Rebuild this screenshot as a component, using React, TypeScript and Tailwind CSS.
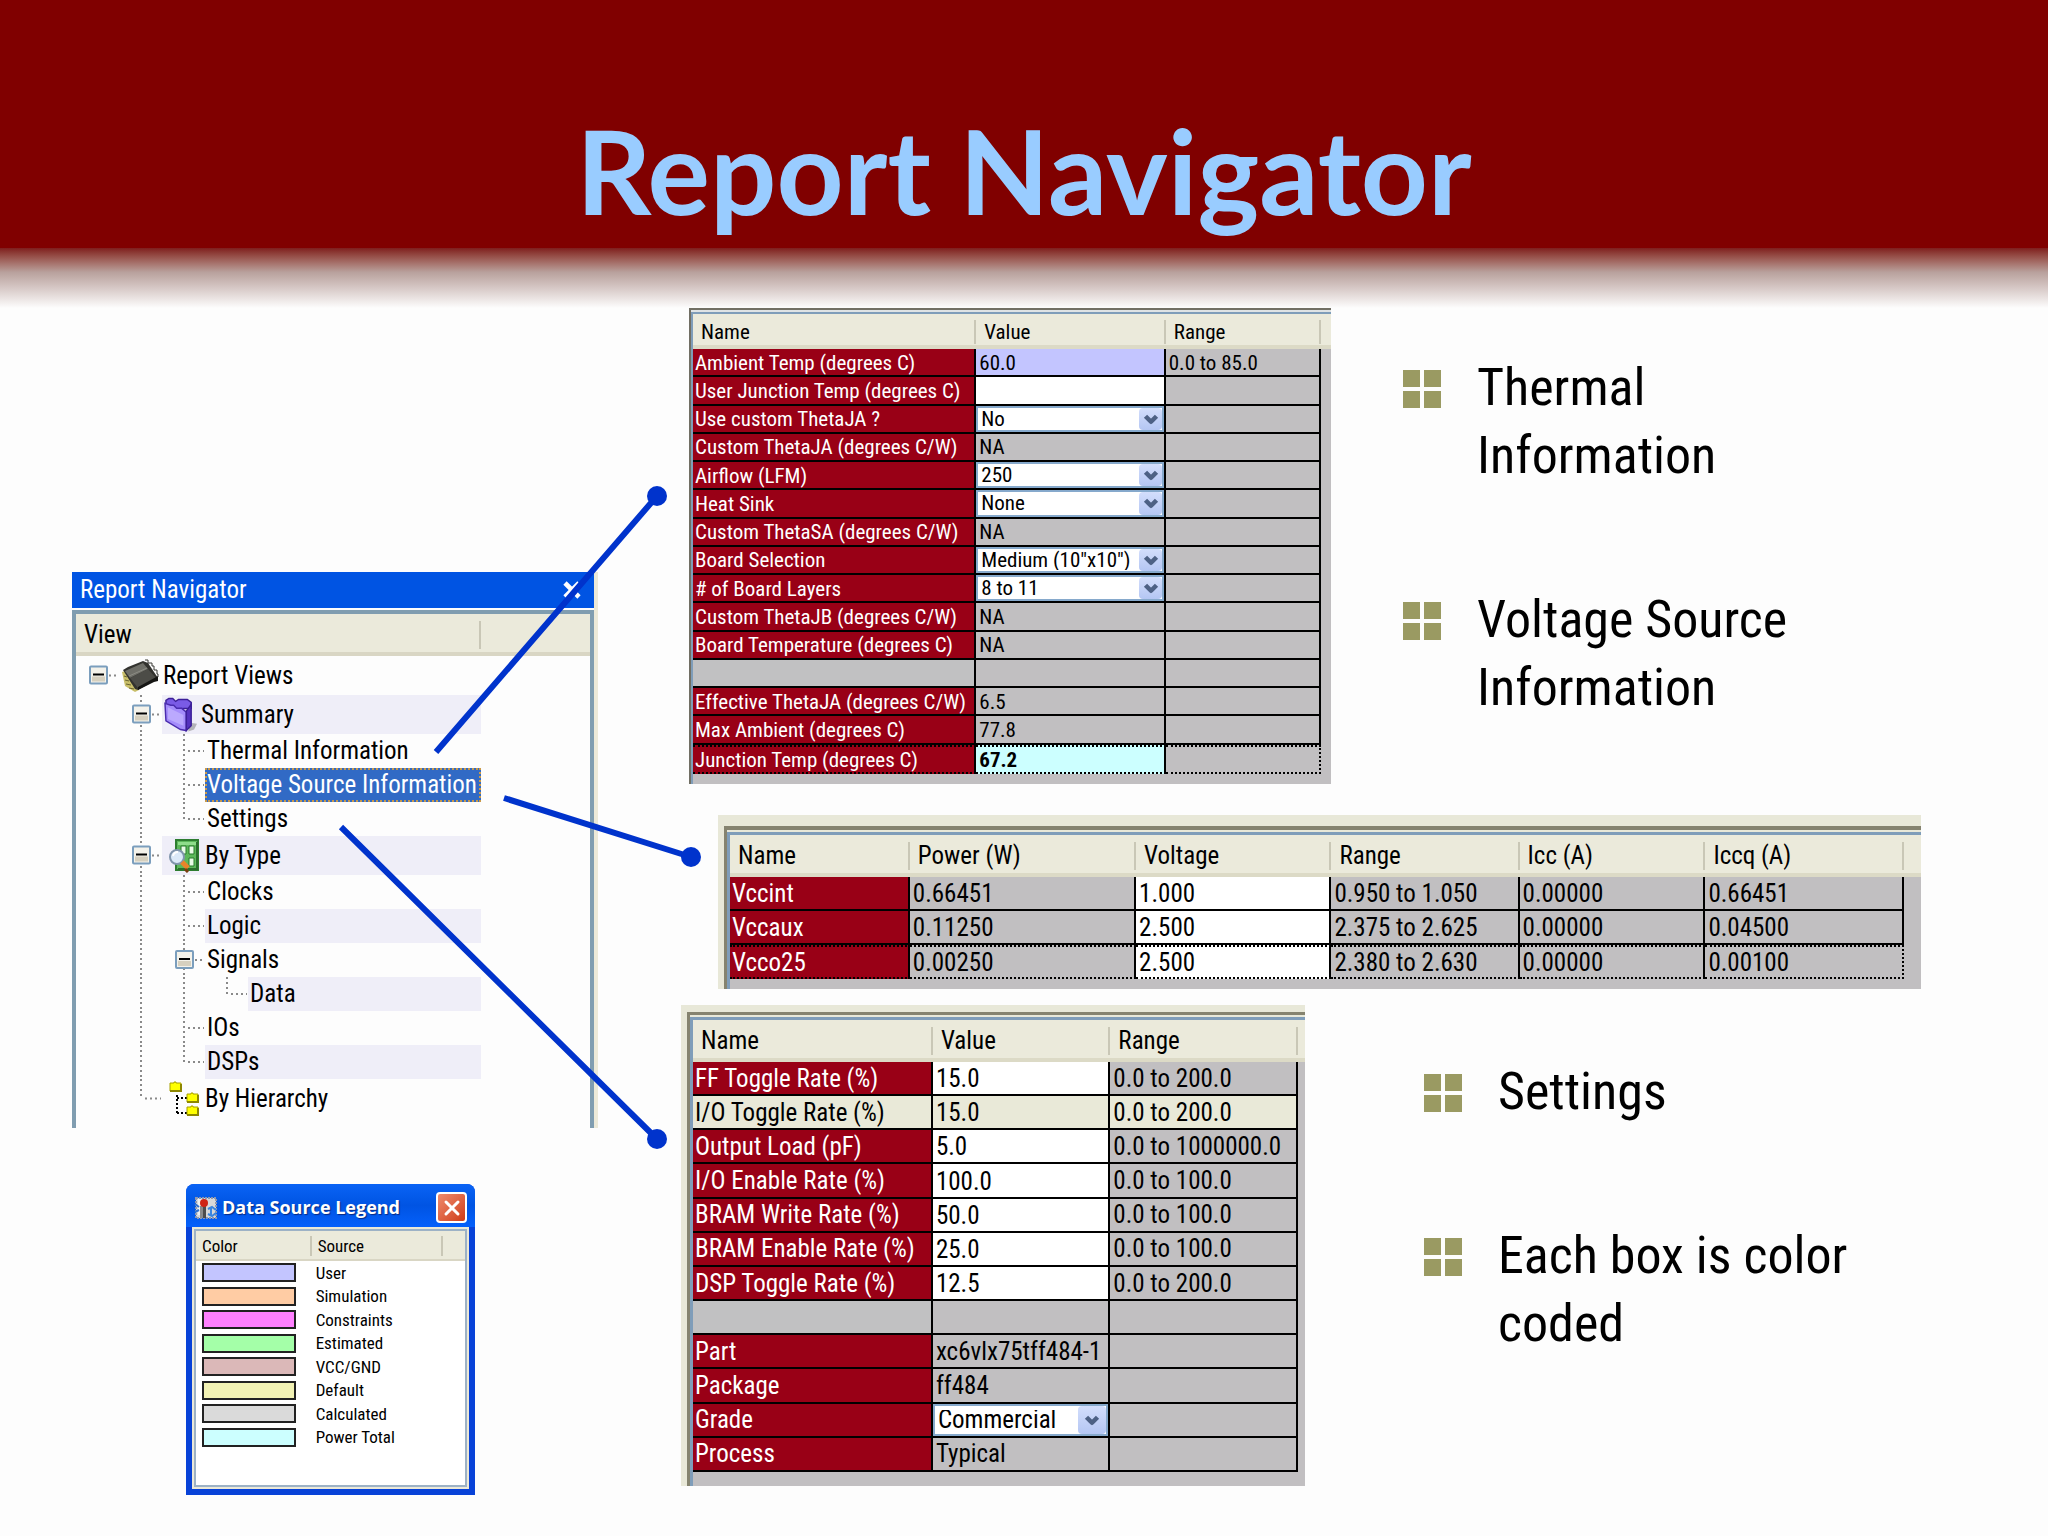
import React, { useState } from 'react';
import { ChevronDown, X } from 'lucide-react';

type Tone = 'gray' | 'white' | 'user' | 'total' | 'default';

type Cell = {
  text?: string;
  tone?: Tone;
  options?: string[];
};

type Row = {
  name: string;
  tone?: 'default';
  cells: Cell[];
  focused?: boolean;
};

type Column = { label: string; width: string };

const tones: Record<Tone, string> = {
  gray: 'bg-[#c1bfc1]',
  white: 'bg-white',
  user: 'bg-[#c3c5ff]',
  total: 'bg-[#ccffff]',
  default: 'bg-[#e9e9d8]',
};

const thermalColumns: Column[] = [
  { label: 'Name', width: 'w-[44.4%]' },
  { label: 'Value', width: 'w-[29.7%]' },
  { label: 'Range', width: 'w-[24.4%]' },
];

const thermalRows: Row[] = [
  { name: 'Ambient Temp (degrees C)', cells: [{ text: '60.0', tone: 'user' }, { text: '0.0 to 85.0' }] },
  { name: 'User Junction Temp (degrees C)', cells: [{ text: '', tone: 'white' }, {}] },
  { name: 'Use custom ThetaJA ?', cells: [{ options: ['No', 'Yes'] }, {}] },
  { name: 'Custom ThetaJA (degrees C/W)', cells: [{ text: 'NA' }, {}] },
  { name: 'Airflow (LFM)', cells: [{ options: ['250', '0', '500'] }, {}] },
  { name: 'Heat Sink', cells: [{ options: ['None', 'Custom'] }, {}] },
  { name: 'Custom ThetaSA (degrees C/W)', cells: [{ text: 'NA' }, {}] },
  { name: 'Board Selection', cells: [{ options: ['Medium (10"x10")', 'Custom'] }, {}] },
  { name: '# of Board Layers', cells: [{ options: ['8 to 11', '12 to 15'] }, {}] },
  { name: 'Custom ThetaJB (degrees C/W)', cells: [{ text: 'NA' }, {}] },
  { name: 'Board Temperature (degrees C)', cells: [{ text: 'NA' }, {}] },
  { name: '', cells: [{}, {}] },
  { name: 'Effective ThetaJA (degrees C/W)', cells: [{ text: '6.5' }, {}] },
  { name: 'Max Ambient (degrees C)', cells: [{ text: '77.8' }, {}] },
  { name: 'Junction Temp (degrees C)', cells: [{ text: '67.2', tone: 'total' }, {}], focused: true },
];

const voltageColumns: Column[] = [
  { label: 'Name', width: 'w-[15.1%]' },
  { label: 'Power (W)', width: 'w-[19%]' },
  { label: 'Voltage', width: 'w-[16.4%]' },
  { label: 'Range', width: 'w-[15.8%]' },
  { label: 'Icc (A)', width: 'w-[15.6%]' },
  { label: 'Iccq (A)', width: 'w-[16.7%]' },
];

const voltageRows: Row[] = [
  {
    name: 'Vccint',
    cells: [{ text: '0.66451' }, { text: '1.000', tone: 'white' }, { text: '0.950 to 1.050' }, { text: '0.00000' }, { text: '0.66451' }],
  },
  {
    name: 'Vccaux',
    cells: [{ text: '0.11250' }, { text: '2.500', tone: 'white' }, { text: '2.375 to 2.625' }, { text: '0.00000' }, { text: '0.04500' }],
  },
  {
    name: 'Vcco25',
    cells: [{ text: '0.00250' }, { text: '2.500', tone: 'white' }, { text: '2.380 to 2.630' }, { text: '0.00000' }, { text: '0.00100' }],
    focused: true,
  },
];

const settingsColumns: Column[] = [
  { label: 'Name', width: 'w-[39.2%]' },
  { label: 'Value', width: 'w-[29%]' },
  { label: 'Range', width: 'w-[30.7%]' },
];

const settingsRows: Row[] = [
  { name: 'FF Toggle Rate (%)', cells: [{ text: '15.0', tone: 'white' }, { text: '0.0 to 200.0' }] },
  {
    name: 'I/O Toggle Rate (%)',
    tone: 'default',
    cells: [{ text: '15.0', tone: 'default' }, { text: '0.0 to 200.0', tone: 'default' }],
  },
  { name: 'Output Load (pF)', cells: [{ text: '5.0', tone: 'white' }, { text: '0.0 to 1000000.0' }] },
  { name: 'I/O Enable Rate (%)', cells: [{ text: '100.0', tone: 'white' }, { text: '0.0 to 100.0' }] },
  { name: 'BRAM Write Rate (%)', cells: [{ text: '50.0', tone: 'white' }, { text: '0.0 to 100.0' }] },
  { name: 'BRAM Enable Rate (%)', cells: [{ text: '25.0', tone: 'white' }, { text: '0.0 to 100.0' }] },
  { name: 'DSP Toggle Rate (%)', cells: [{ text: '12.5', tone: 'white' }, { text: '0.0 to 200.0' }] },
  { name: '', cells: [{}, {}] },
  { name: 'Part', cells: [{ text: 'xc6vlx75tff484-1' }, {}] },
  { name: 'Package', cells: [{ text: 'ff484' }, {}] },
  { name: 'Grade', cells: [{ options: ['Commercial', 'Industrial'] }, {}] },
  { name: 'Process', cells: [{ text: 'Typical' }, {}] },
];

const legend = [
  { color: 'bg-[#c3c5ff]', source: 'User' },
  { color: 'bg-[#ffcca4]', source: 'Simulation' },
  { color: 'bg-[#ff80ff]', source: 'Constraints' },
  { color: 'bg-[#a4ffa8]', source: 'Estimated' },
  { color: 'bg-[#dbb8b8]', source: 'VCC/GND' },
  { color: 'bg-[#f2f2b4]', source: 'Default' },
  { color: 'bg-[#dadada]', source: 'Calculated' },
  { color: 'bg-[#ccffff]', source: 'Power Total' },
];

const CellContent: React.FC<{ cell: Cell; label: string; bold?: boolean }> = ({ cell, label, bold }) => {
  if (cell.options) {
    return (
      <div className="relative h-full border-2 border-[#86a9cc] bg-white">
        <select aria-label={label} className="block h-full w-full appearance-none bg-white pl-[3px] leading-5 outline-none">
          {cell.options.map((o) => (
            <option key={o}>{o}</option>
          ))}
        </select>
        <span className="pointer-events-none absolute inset-y-0 right-0 flex aspect-square items-center justify-center rounded-sm bg-linear-to-b from-[#d3defc] to-[#b4c6f3] text-[#4d6185]">
          <ChevronDown size={22} strokeWidth={5} strokeLinecap="butt" />
        </span>
      </div>
    );
  }
  if (cell.tone && cell.tone !== 'gray' && !bold) {
    return (
      <input
        aria-label={label}
        defaultValue={cell.text}
        className="block h-full w-full bg-transparent pl-[3px] leading-5 outline-none"
      />
    );
  }
  return <span className={bold ? 'pl-[3px] font-bold' : 'pl-[3px]'}>{cell.text}</span>;
};

const HeaderCell: React.FC<{ label: string }> = ({ label }) => (
  <th scope="col" className="border-b-4 border-[#dcdac6] p-0 pt-1 text-left font-normal">
    <div className="border-r-2 border-[#c9c7b6] pl-2">{label}</div>
  </th>
);

type GridProps = {
  caption: string;
  columns: Column[];
  rows: Row[];
  className: string;
  headClass: string;
  rowClass: string;
};

const PropertyGrid: React.FC<GridProps> = ({ caption, columns, rows, className, headClass, rowClass }) => (
  <table aria-label={caption} className={`w-full table-fixed border-separate border-spacing-0 whitespace-nowrap ${className}`}>
    <colgroup>
      {columns.map((c) => (
        <col key={c.label} className={c.width} />
      ))}
      <col />
    </colgroup>
    <thead className="bg-[#ebeadb]">
      <tr className={headClass}>
        {columns.map((c) => (
          <HeaderCell key={c.label} label={c.label} />
        ))}
        <td className="border-b-4 border-[#dcdac6] p-0" />
      </tr>
    </thead>
    <tbody>
      {rows.map((row, i) => {
        const line = row.focused ? 'border-y-2 border-y-black [border-top-style:dotted] [border-bottom-style:dotted]' : 'border-b-2 border-black';
        const nameTone = row.tone ? 'bg-[#e9e9d8] text-black' : row.name ? 'bg-[#990016] text-white' : 'bg-[#c1c1c2]';
        return (
          <tr key={i} className={rowClass}>
            <th scope="row" className={`border-r-2 border-r-black p-0 pl-0.5 pt-px text-left font-normal ${line} ${nameTone}`}>
              {row.name}
            </th>
            {row.cells.map((cell, j) => {
              const last = j === row.cells.length - 1;
              return (
                <td
                  key={j}
                  className={`h-px p-0 border-r-2 border-r-black ${cell.options ? '' : 'pt-px'} ${line} ${tones[cell.tone || 'gray']} ${
                    row.focused && last ? '[border-right-style:dotted]' : ''
                  }`}
                >
                  <CellContent cell={cell} label={`${row.name} ${columns[j + 1].label}`} bold={cell.tone === 'total'} />
                </td>
              );
            })}
            <td className="p-0" />
          </tr>
        );
      })}
    </tbody>
  </table>
);

const ChipIcon = () => (
  <svg width="38" height="34" viewBox="0 0 38 34" className="shrink-0">
    <path d="M1 13l3 14 10 6 4-2L4 12z" fill="#c9bf6a" />
    <path d="M3 17l3 1M4 21l4 1M5 25l5 1M8 29l5 1" stroke="#6a6430" strokeWidth="1" />
    <path d="M2 11L7 8l15-6 5 2 10 15-4 3-16 9-3-1z" fill="#33332f" />
    <path d="M4 12L22 4l5 6-18 9z" fill="#6f6f68" />
    <path d="M9 19l18-9 8 9-18 10z" fill="#4c4c47" />
    <path d="M8 17l18-8" stroke="#8c8c84" strokeWidth="1" />
    <path d="M37 17v5l-4 1-16 8v-3z" fill="#151513" />
    <path d="M24 1h3v3h4v3h2v4h3v4h1v3" stroke="#3a3a36" strokeWidth="1" fill="none" />
  </svg>
);

const FolderIcon = () => (
  <svg width="33" height="36" viewBox="0 0 34 36" className="shrink-0">
    <path d="M27 26l7 1-3 6-6 2z" fill="#777" opacity=".5" />
    <path d="M2 3l3-2h4l3 3 3-2h9l4 3v6L2 12z" fill="#7a5be6" stroke="#3c1f98" strokeWidth="1.500" />
    <path d="M1 6l6 2h3l3 3h5l5 4v19l-6-1L2 24z" fill="#a48cfb" stroke="#4a2cae" strokeWidth="1.500" />
    <path d="M4 10l6 3 6 3 4 2v11L4 22z" fill="#c4b5ff" opacity=".7" />
    <path d="M23 14l5-7v22l-5 5z" fill="#5532bf" stroke="#3c1f98" strokeWidth="1.500" />
  </svg>
);

const TypeIcon = () => (
  <svg width="37" height="34" viewBox="-5 0 37 34" className="shrink-0">
    <path d="M7 1h22v30H7z" fill="#5cb85a" stroke="#2d7d30" strokeWidth="2" />
    <path d="M9 3h18v3H9z" fill="#8fdd8b" />
    <path d="M27 3h2v28H9v-2h18z" fill="#2a6f2c" />
    <path d="M12 7h5v8h-5zM20 7h5v8h-5zM20 19h5v8h-5z" fill="#e9fbe6" stroke="#277a2a" />
    <circle cx="8" cy="18" r="7" fill="#dbe9f8" stroke="#8095ac" strokeWidth="2" />
    <path d="M4 17a5 5 0 0 1 5-4" stroke="#fff" strokeWidth="2" fill="none" />
    <path d="M13 23l6 6" stroke="#e8842a" strokeWidth="5" />
    <path d="M16 30l3 3" stroke="#7a3d10" strokeWidth="3" />
  </svg>
);

const HierarchyIcon = () => (
  <svg width="37" height="36" viewBox="-5 0 37 36" className="shrink-0">
    <path d="M8 14v18M8 17h10M8 32h10" stroke="#000" strokeWidth="2" strokeDasharray="2 2" fill="none" />
    <path d="M1 2h4V1h2v1h5v8H1zM18 13h4v-1h2v1h5v8H18zM18 26h4v-1h2v1h5v8H18z" fill="#ffff00" stroke="#a8a000" strokeWidth="1" />
    <path d="M1 10h11V3M18 21h11v-7M18 34h11v-7" stroke="#8d8700" strokeWidth="2" fill="none" />
  </svg>
);

const LegendIcon = () => (
  <svg width="24" height="24" viewBox="0 0 24 24" className="shrink-0">
    <rect x="2" y="2" width="20" height="20" fill="#d8d8d8" stroke="#8f98ae" strokeWidth="2" strokeDasharray="2 1" />
    <path d="M4 3h5v16H4z" fill="#f0f0f0" />
    <path d="M6 10h6v12H6z" fill="#8a8a8a" />
    <path d="M9 9h3v13H9z" fill="#4c4c4c" />
    <circle cx="10" cy="7" r="4" fill="#cf2414" />
    <path d="M14 13l4-2 4 3M14 18l4 2 4-3M17 11v9" stroke="#3a86e0" strokeWidth="2" fill="none" />
    <path d="M1 8l4 3M1 16l4-2" stroke="#2f70d0" strokeWidth="2" />
  </svg>
);

const Dots: React.FC<{ x1: string; y1: string; x2: string; y2: string }> = (p) => (
  <line {...p} stroke="#8a8a8a" strokeWidth="2" strokeDasharray="2 3" />
);

type Guide = 'none' | 'line' | 'tee' | 'elbow' | 'root' | 'branch';

// one indentation step of the tree
const GuideCell: React.FC<{ guide: Guide; label: string; onToggle: () => void }> = ({ guide, label, onToggle }) => {
  if (guide === 'root' || guide === 'branch') {
    return (
      <button type="button" aria-label={`Collapse ${label}`} onClick={onToggle} className="h-full w-[43px] shrink-0">
        <svg width="100%" height="100%">
          {guide === 'branch' && <Dots x1="22" y1="0" x2="22" y2="100%" />}
          <Dots x1="33" y1="50%" x2="43" y2="50%" />
          <svg y="50%" x="13" overflow="visible">
            <rect x="1" y="-9" width="17" height="17" rx="1" fill="#f4f2ea" stroke="#7b9ebd" strokeWidth="2" />
            <rect x="3" y="1" width="13" height="5" fill="#d6d0bf" />
            <rect x="4" y="-2" width="11" height="2" fill="#000" />
          </svg>
        </svg>
      </button>
    );
  }
  return (
    <svg width="43" height="100%" className="shrink-0">
      {(guide === 'line' || guide === 'tee') && <Dots x1="22" y1="0" x2="22" y2="100%" />}
      {guide === 'elbow' && <Dots x1="22" y1="0" x2="22" y2="50%" />}
      {(guide === 'tee' || guide === 'elbow') && <Dots x1="26" y1="50%" x2="42" y2="50%" />}
    </svg>
  );
};

type TreeRow = {
  label: string;
  guides: Guide[];
  icon?: React.ReactNode;
  shaded?: boolean;
};

const tree: TreeRow[] = [
  { label: 'Report Views', guides: ['root'], icon: <ChipIcon /> },
  { label: 'Summary', guides: ['none', 'branch'], icon: <FolderIcon />, shaded: true },
  { label: 'Thermal Information', guides: ['none', 'line', 'tee'] },
  { label: 'Voltage Source Information', guides: ['none', 'line', 'tee'] },
  { label: 'Settings', guides: ['none', 'line', 'elbow'] },
  { label: 'By Type', guides: ['none', 'branch'], icon: <TypeIcon />, shaded: true },
  { label: 'Clocks', guides: ['none', 'line', 'tee'] },
  { label: 'Logic', guides: ['none', 'line', 'tee'], shaded: true },
  { label: 'Signals', guides: ['none', 'line', 'branch'] },
  { label: 'Data', guides: ['none', 'line', 'line', 'elbow'], shaded: true },
  { label: 'IOs', guides: ['none', 'line', 'tee'] },
  { label: 'DSPs', guides: ['none', 'line', 'elbow'], shaded: true },
  { label: 'By Hierarchy', guides: ['none', 'elbow'], icon: <HierarchyIcon /> },
];

const NavigatorWindow = () => {
  const [selected, setSelected] = useState('Voltage Source Information');

  return (
    <section className="border-r-4 border-[#ece9d8] text-[25px] leading-7">
      <div className="flex h-9 items-center justify-between bg-[#0054e3] px-2 text-white">
        <h2>Report Navigator</h2>
        <button type="button" aria-label="Close navigator">
          <X size={28} strokeWidth={4} strokeLinecap="butt" />
        </button>
      </div>
      <div className="mt-0.5 border-x-4 border-t-4 border-[#809db0] pb-2.5">
        <div className="flex h-[42px] items-center border-b-4 border-[#d9d6c4] bg-[#ebeadb] pt-1">
          <span className="flex-1 border-r-2 border-[#c9c7b6] pl-2">View</span>
          <span className="w-[109px]" />
        </div>
        <ul>
          {tree.map((row) => {
            const active = selected === row.label;
            const tone = active
              ? 'bg-[#316ac5] text-white outline-2 -outline-offset-2 outline-dotted outline-[#c99a4a]'
              : row.shaded
                ? 'bg-[#efeef8]'
                : '';
            return (
              <li key={row.label} className={`flex pr-[109px] ${row.icon ? 'h-[39px]' : 'h-[34px]'}`}>
                {row.guides.map((g, i) => (
                  <GuideCell key={i} guide={g} label={row.label} onToggle={() => setSelected(row.label)} />
                ))}
                <button
                  type="button"
                  onClick={() => setSelected(row.label)}
                  className={`flex flex-1 items-center gap-1 whitespace-nowrap pl-0.5 text-left ${tone}`}
                >
                  {row.icon}
                  {row.label}
                </button>
              </li>
            );
          })}
        </ul>
      </div>
    </section>
  );
};

const LegendWindow = () => (
  <section className="rounded-t-lg bg-[#0842d8] px-1.5 pb-1.5 text-[17px]">
    <div className="-mx-1.5 flex h-[43px] items-center gap-1 rounded-t-lg bg-linear-to-b from-[#0a63f5] via-[#0054e3] to-[#0560fb] px-2 pt-1">
      <LegendIcon />
      <h2 className="flex-1 whitespace-nowrap font-['Open_Sans',sans-serif] text-[18px] font-bold text-white [text-shadow:1px_1px_1px_#0a2a80]">
        Data Source Legend
      </h2>
      <button
        type="button"
        aria-label="Close legend"
        className="flex size-[31px] items-center justify-center rounded border-2 border-white bg-linear-to-br from-[#ee8a6c] to-[#cf3a12] text-white"
      >
        <X size={24} strokeWidth={3} />
      </button>
    </div>
    <div className="bg-[#ece9d8] p-0.5">
      <div className="border-2 border-[#9db2c6] bg-white pb-9">
        <table aria-label="Data source legend" className="h-[218px] w-full table-fixed border-separate border-spacing-0">
          <colgroup>
            <col className="w-[43%]" />
            <col className="w-[49%]" />
            <col />
          </colgroup>
          <thead className="bg-[#ebeadb]">
            <tr className="h-[30px]">
              {['Color', 'Source'].map((h) => (
                <th key={h} scope="col" className="border-b-2 border-[#d9d6c4] p-0 pt-0.5 text-left font-normal">
                  <div className="border-r-2 border-[#c9c7b6] pl-1.5 leading-5">{h}</div>
                </th>
              ))}
              <td className="border-b-2 border-[#d9d6c4] p-0" />
            </tr>
          </thead>
          <tbody>
            {legend.map((item) => (
              <tr key={item.source}>
                <td className="p-0 pl-1.5">
                  <div className={`h-[19px] w-[94px] border-2 border-[#222] ${item.color}`} />
                </td>
                <td className="p-0 pl-1 leading-5" colSpan={2}>
                  {item.source}
                </td>
              </tr>
            ))}
          </tbody>
        </table>
      </div>
    </div>
  </section>
);

const Bullets: React.FC<{ items: string[]; className: string }> = ({ items, className }) => (
  <ul className={`flex flex-col gap-24 text-[52px] leading-[68px] ${className}`}>
    {items.map((item) => (
      <li key={item} className="flex gap-9">
        <svg width="38" height="38" viewBox="0 0 38 38" className="mt-4 shrink-0" fill="#9a9a62">
          <path d="M0 0h17v17H0zM21 0h17v17H21zM0 21h17v17H0zM21 21h17v17H21z" />
        </svg>
        <p className="max-w-[410px]">{item}</p>
      </li>
    ))}
  </ul>
);

const Connectors = () => (
  <svg viewBox="0 0 2048 1288" className="pointer-events-none absolute left-0 top-0 w-full" stroke="#0033cc" strokeWidth="6" fill="#0033cc">
    <path d="M436 504L657 248M504 550L691 609M341 579L657 891" />
    <g stroke="none">
      <circle cx="657" cy="248" r="10" />
      <circle cx="691" cy="609" r="10" />
      <circle cx="657" cy="891" r="10" />
    </g>
  </svg>
);

const App: React.FC = () => {
  return (
    <div className="min-h-screen bg-[#fdfdfd] font-['Roboto_Condensed','Liberation_Sans',sans-serif] text-black">
      <header className="flex h-[248px] items-end justify-center bg-[#800000] pb-2">
        <h1 className="font-['Lato',sans-serif] text-[117px] font-bold leading-[140px] text-[#99ccff]">Report Navigator</h1>
      </header>

      <main className="relative">
        <div className="h-[60px] bg-linear-to-b from-[#7f1d1d] via-[#b8a09c] via-40% to-[#fdfdfd]" />
        <div className="grid grid-cols-[526fr_1450fr] pl-[72px]">
          <div className="pt-[264px]">
            <NavigatorWindow />
            <div className="ml-[114px] mr-[123px] mt-14">
              <LegendWindow />
            </div>
          </div>

          <div>
            <div className="grid grid-cols-[642fr_717fr] pl-[91px]">
              <div className="border-l-2 border-t-2 border-[#716f64] bg-[#dfe3e4] pt-0.5">
                <div className="border-l-2 border-t-2 border-[#7f9db9] bg-[#c1bfc1] pb-2.5">
                  <PropertyGrid
                    caption="Thermal information"
                    columns={thermalColumns}
                    rows={thermalRows}
                    className="h-[460px] text-[21px] leading-6"
                    headClass="h-[35px]"
                    rowClass="h-7"
                  />
                </div>
              </div>
              <Bullets items={['Thermal Information', 'Voltage Source Information']} className="pl-[72px] pt-[46px]" />
            </div>

            <div className="ml-[120px] mr-[127px] mt-[31px] bg-[#e8e8d8] pl-1.5 pt-[11px]">
              <div className="border-l-3 border-t-4 border-[#85836f] bg-[#e8e8d8] pt-0.5">
                <div className="border-l-3 border-t-3 border-[#7f9db9] bg-[#c1bfc1] pb-2.5">
                  <PropertyGrid
                    caption="Voltage source information"
                    columns={voltageColumns}
                    rows={voltageRows}
                    className="h-[144px] text-[25px] leading-7"
                    headClass="h-[42px]"
                    rowClass="h-[34px]"
                  />
                </div>
              </div>
            </div>

            <div className="mt-4 grid grid-cols-[624fr_743fr] pl-[83px]">
              <div className="bg-[#e8e8d8] pl-1.5 pt-[7px]">
                <div className="border-l-3 border-t-3 border-[#85836f] pt-0.5">
                  <div className="border-l-3 border-t-3 border-[#7f9db9] bg-[#c1bfc1] pb-3.5">
                    <PropertyGrid
                      caption="Settings"
                      columns={settingsColumns}
                      rows={settingsRows}
                      className="h-[452px] text-[25px] leading-7"
                      headClass="h-[42px]"
                      rowClass="h-[34px]"
                    />
                  </div>
                </div>
              </div>
              <Bullets items={['Settings', 'Each box is color coded']} className="pl-[119px] pt-[53px]" />
            </div>
          </div>
        </div>
        <Connectors />
      </main>
    </div>
  );
};

export default App;
